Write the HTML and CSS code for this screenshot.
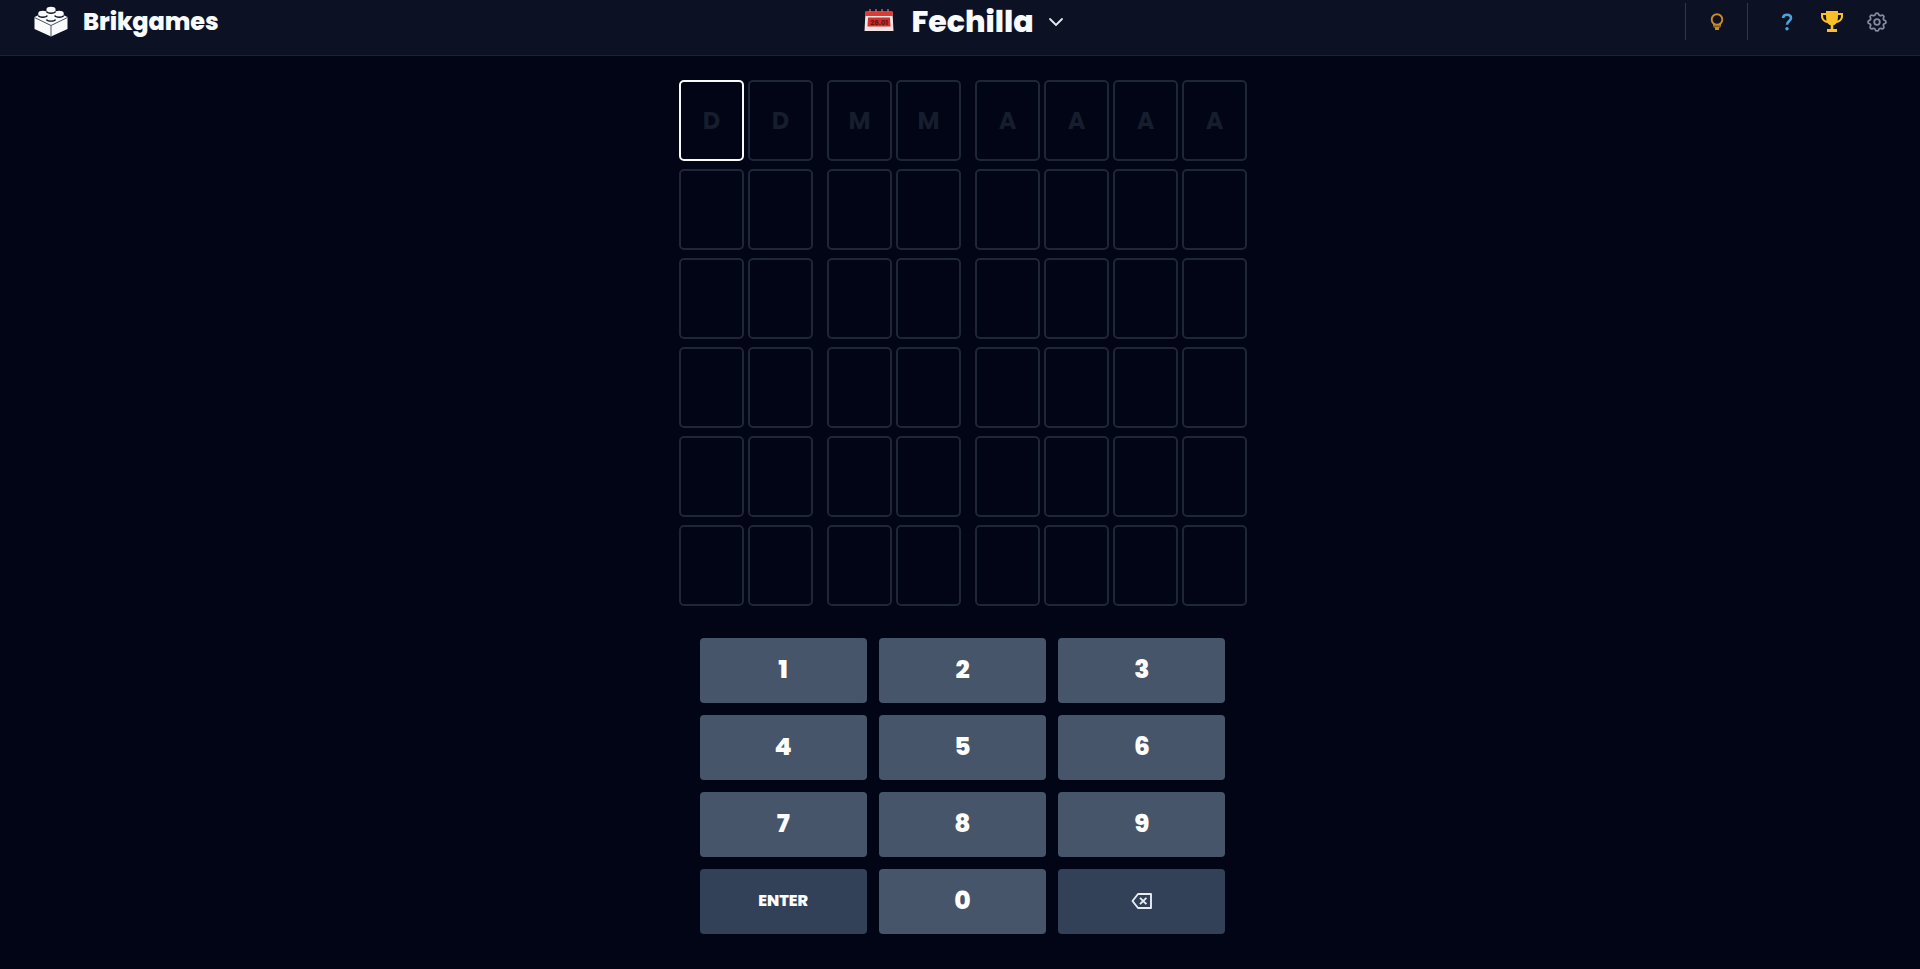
FILE: index.html
```
<!DOCTYPE html>
<html lang="es">
<head>
	<meta charset="UTF-8">
	<title>Fechilla</title>
	<link rel="stylesheet" href="styles.css">
</head>
<body>
	<header>
		<div class="brand">
			<svg class="logo" width="34" height="32" viewBox="0 0 34 32">
				<path d="M.5 12 17 4.500 33.500 12v12L17 31.500.5 24z" fill="#f8fafc"/>
				<path d="M.5 12.500 17 20.500l16.500-8M17 20.500v11" fill="none" stroke="#3a4152" stroke-width=".9"/>
				<g fill="#f8fafc">
					<path d="M12.500 4v3c0 2.600 9 2.600 9 0V4c0-3-9-3-9 0z"/>
					<path d="M4.300 8v3c0 2.600 9 2.600 9 0V8c0-3-9-3-9 0z"/>
					<path d="M20.700 8v3c0 2.600 9 2.600 9 0V8c0-3-9-3-9 0z"/>
					<path d="M12.500 12v3c0 2.600 9 2.600 9 0v-3c0-3-9-3-9 0z"/>
				</g>
				<g fill="none" stroke="#0d1425" stroke-width="1.300">
					<path d="M12.500 6.500c1 2.300 8 2.300 9 0"/>
					<path d="M4.300 10.500c1 2.300 8 2.300 9 0"/>
					<path d="M20.700 10.500c1 2.300 8 2.300 9 0"/>
					<path d="M12.500 14.500c1 2.300 8 2.300 9 0"/>
				</g>
			</svg>
			<span class="brand-name">Brikgames</span>
		</div>
		<div class="title">
			<svg class="calendar" width="30" height="24" viewBox="0 0 30 24">
				<path d="M1.500 4h27l1 19H.5z" fill="#f1e4e4"/>
				<path d="M1.500 3h27l.4 5H1.100z" fill="#dc3b35"/>
				<path d="M6 1v3M12 1v3M18 1v3M24 1v3" stroke="#c9827f" stroke-width="1.200"/>
				<path d="M4 9.500h22l.5 9h-23z" fill="#cf2f2b"/>
				<text x="15" y="17.200" text-anchor="middle">28.01</text>
			</svg>
			<h1>Fechilla</h1>
			<svg class="arrow" width="16" height="10" viewBox="0 0 16 10">
				<path d="m2 2 6 6 6-6" fill="none" stroke="#e2e8f0" stroke-width="1.800" stroke-linecap="round" stroke-linejoin="round"/>
			</svg>
		</div>
		<div class="tools">
			<div class="hint">
				<svg width="14" height="18" viewBox="0 0 14 18">
					<circle cx="7" cy="6.500" r="5.300" fill="none" stroke="#c98a20" stroke-width="1.900"/>
					<path d="M3 11h8v3l-2 .8V17H5v-2.200L3 14z" fill="#c98a20"/>
					<path d="M3 13.200h8" stroke="#0c1223" stroke-width=".6"/>
				</svg>
			</div>
			<svg class="help" width="12" height="18" viewBox="0 0 12 18">
				<path d="M2 5C2.300 2.600 4 1.700 6 1.700c2.300 0 4 1.300 4 3.300C10 8 6 8.200 6 11.800" fill="none" stroke="#4ba3dc" stroke-width="2.600"/>
				<circle cx="6" cy="15.700" r="1.700" fill="#4ba3dc"/>
			</svg>
			<svg class="trophy" width="22" height="21" viewBox="0 0 22 21">
				<path d="M5 0h12v2h5v3c0 4-3 6.500-6.500 7-.9 1.200-2 2-3.200 2.200V18H16v3H6v-3h3.700v-3.800C8.500 14 7.400 13.200 6.500 12 3 11.500 0 9 0 5V2h5zM2 4v1c0 2.200 1.300 4 3.500 4.700C5.100 8 5 6 5 4zm15 0c0 2-.1 4-.5 5.700C18.700 9 20 7.200 20 5V4z" fill="#fbc028" fill-rule="evenodd"/>
			</svg>
			<svg class="gear" width="20" height="20" viewBox="2 2 20 20" fill="none" stroke="#858ca0" stroke-width="1.800" stroke-linejoin="round">
				<path d="M10.300 4.300c.4-1.700 3-1.700 3.400 0a1.700 1.700 0 0 0 2.600 1.100c1.500-1 3.300.8 2.300 2.300a1.700 1.700 0 0 0 1.100 2.600c1.700.4 1.700 3 0 3.400a1.700 1.700 0 0 0-1.100 2.600c1 1.500-.8 3.300-2.300 2.300a1.700 1.700 0 0 0-2.600 1.100c-.4 1.700-3 1.700-3.400 0a1.700 1.700 0 0 0-2.600-1.100c-1.500 1-3.300-.8-2.300-2.300a1.700 1.700 0 0 0-1.100-2.600c-1.700-.4-1.700-3 0-3.400a1.700 1.700 0 0 0 1.100-2.600c-1-1.500.8-3.300 2.300-2.300a1.700 1.700 0 0 0 2.600-1.100z"/>
				<circle cx="12" cy="12" r="2.800"/>
			</svg>
		</div>
	</header>
	<main>
		<div class="board">
			<div class="row">
				<div class="group"><div class="cell active">D</div><div class="cell">D</div></div>
				<div class="group"><div class="cell">M</div><div class="cell">M</div></div>
				<div class="group"><div class="cell">A</div><div class="cell">A</div><div class="cell">A</div><div class="cell">A</div></div>
			</div>
			<div class="row">
				<div class="group"><div class="cell"></div><div class="cell"></div></div>
				<div class="group"><div class="cell"></div><div class="cell"></div></div>
				<div class="group"><div class="cell"></div><div class="cell"></div><div class="cell"></div><div class="cell"></div></div>
			</div>
			<div class="row">
				<div class="group"><div class="cell"></div><div class="cell"></div></div>
				<div class="group"><div class="cell"></div><div class="cell"></div></div>
				<div class="group"><div class="cell"></div><div class="cell"></div><div class="cell"></div><div class="cell"></div></div>
			</div>
			<div class="row">
				<div class="group"><div class="cell"></div><div class="cell"></div></div>
				<div class="group"><div class="cell"></div><div class="cell"></div></div>
				<div class="group"><div class="cell"></div><div class="cell"></div><div class="cell"></div><div class="cell"></div></div>
			</div>
			<div class="row">
				<div class="group"><div class="cell"></div><div class="cell"></div></div>
				<div class="group"><div class="cell"></div><div class="cell"></div></div>
				<div class="group"><div class="cell"></div><div class="cell"></div><div class="cell"></div><div class="cell"></div></div>
			</div>
			<div class="row">
				<div class="group"><div class="cell"></div><div class="cell"></div></div>
				<div class="group"><div class="cell"></div><div class="cell"></div></div>
				<div class="group"><div class="cell"></div><div class="cell"></div><div class="cell"></div><div class="cell"></div></div>
			</div>
		</div>
		<div class="keyboard">
			<button>1</button>
			<button>2</button>
			<button>3</button>
			<button>4</button>
			<button>5</button>
			<button>6</button>
			<button>7</button>
			<button>8</button>
			<button>9</button>
			<button class="action">ENTER</button>
			<button>0</button>
			<button class="action">
				<svg width="21" height="16" viewBox="0 0 21 16" fill="none" stroke="#e8edf4" stroke-width="1.900">
					<path d="M7 1h13v14H7L1.500 8z" stroke-linejoin="round"/>
					<path d="m9 4.800 6.400 6.400M15.400 4.800 9 11.200"/>
				</svg>
			</button>
		</div>
	</main>
</body>
</html>
```
FILE: styles.css
```
* {
	box-sizing: border-box;
	margin: 0;
	padding: 0;
}

body {
	height: 969px;
	background-color: #010515;
	color: #f8fafc;
	font-family: Poppins, Inter, sans-serif;
	overflow: hidden;
}

header {
	display: grid;
	grid-template-columns: 1fr auto 1fr;
	height: 56px;
	padding: 0 33px 12px 34px;
	background-color: #0c1223;
	border-bottom: 1px solid #1b2233;
}

.brand, .title, .tools {
	display: flex;
	align-items: center;
}

.logo {
	margin-top: -1px;
}

.brand-name {
	margin-left: 15px;
	font-size: 24px;
	font-weight: 800;
	letter-spacing: -0.1px;
}

.title {
	padding-left: 7px;
}

.calendar {
	margin-top: -3px;
}

.calendar text {
	font-size: 7px;
	font-weight: 700;
	fill: #611414;
}

h1 {
	margin: 0 14px 0 17px;
	font-size: 30px;
	line-height: 40px;
	font-weight: 800;
}

.tools {
	justify-content: flex-end;
}

.hint {
	display: flex;
	align-items: center;
	justify-content: center;
	width: 63px;
	height: 37px;
	margin-right: 33px;
	border-left: 1px solid #30374a;
	border-right: 1px solid #30374a;
}

.trophy {
	margin: 0 24px 0 28px;
}

main {
	display: flex;
	flex-direction: column;
	align-items: center;
	gap: 32px;
	padding: 24px 0 0 6px;
}

.board {
	display: flex;
	flex-direction: column;
	gap: 8px;
}

.row {
	display: flex;
	gap: 14px;
}

.group {
	display: flex;
	gap: 4px;
}

.cell {
	display: flex;
	align-items: center;
	justify-content: center;
	width: 65px;
	height: 81px;
	padding-bottom: 1px;
	border: 2px solid #1e2637;
	border-radius: 5px;
	color: #161d2d;
	font-size: 24px;
	font-weight: 700;
}

.active {
	border-color: #f8fafc;
}

.keyboard {
	display: grid;
	grid-template-columns: repeat(3, 1fr);
	grid-auto-rows: 65px;
	gap: 12px;
	width: 526px;
	margin-right: 1px;
}

button {
	display: flex;
	align-items: center;
	justify-content: center;
	padding-bottom: 1px;
	border: 0;
	border-radius: 4px;
	background-color: #46556a;
	color: #fff;
	font: inherit;
	font-size: 25px;
	font-weight: 800;
}

.action {
	padding-bottom: 2px;
	background-color: #324158;
	font-size: 16px;
}
```
